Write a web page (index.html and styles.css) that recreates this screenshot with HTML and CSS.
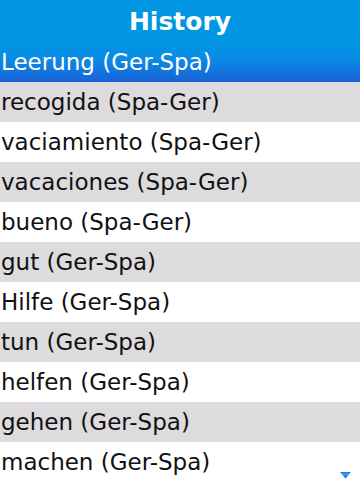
FILE: index.html
```html
<!DOCTYPE html>
<html lang="en">
<head>
  <meta charset="UTF-8" />
  <meta name="viewport" content="width=device-width, initial-scale=1.0"/>
  <title>History</title>
  <link rel="stylesheet" href="styles.css">
</head>
<body>

<header class="title-bar">
  <h1 class="title">History</h1>
</header>

<ul class="history-list">
  <li class="item selected">Leerung (Ger-Spa)</li>
  <li class="item">recogida (Spa-Ger)</li>
  <li class="item">vaciamiento (Spa-Ger)</li>
  <li class="item">vacaciones (Spa-Ger)</li>
  <li class="item">bueno (Spa-Ger)</li>
  <li class="item">gut (Ger-Spa)</li>
  <li class="item">Hilfe (Ger-Spa)</li>
  <li class="item">tun (Ger-Spa)</li>
  <li class="item">helfen (Ger-Spa)</li>
  <li class="item">gehen (Ger-Spa)</li>
  <li class="item">machen (Ger-Spa)</li>
</ul>

<!-- more below -->
<svg class="scroll-arrow" width="11" height="7" viewBox="0 0 11 7">
  <defs>
    <linearGradient id="arrowGrad" x1="0" y1="0" x2="0" y2="1">
      <stop offset="0" stop-color="#1a70d8"/>
      <stop offset="0.3" stop-color="#3aa4fa"/>
      <stop offset="1" stop-color="#0a5ad0"/>
    </linearGradient>
  </defs>
  <polygon points="0,0 11,0 5.5,6.5" fill="url(#arrowGrad)"/>
</svg>

</body>
</html>
```

FILE: styles.css
```css
body {
  font-family: "DejaVu Sans", sans-serif;
  margin: 0;
  padding: 0;
  width: 360px;
  height: 480px;
  overflow: hidden;
  background-color: #ffffff;
  color: #111;
  position: relative;
}

.title-bar {
  height: 42px;
  background-color: #0096e2;
  display: flex;
  align-items: center;
  justify-content: center;
}

.title {
  margin: 0;
  color: #ffffff;
  font-size: 25px;
  font-weight: bold;
}

.history-list {
  list-style: none;
  margin: 0;
  padding: 0;
}

.item {
  height: 40px;
  line-height: 40px;
  padding-left: 1px;
  font-size: 23px;
  white-space: nowrap;
}

.item:nth-child(even) {
  background-color: #dddbdd;
}

.item.selected {
  color: #ffffff;
  background: linear-gradient(#0096e2, #0a8ce6 40%, #1a62d6);
}

.scroll-arrow {
  position: absolute;
  right: 9px;
  bottom: 1px;
}
```
